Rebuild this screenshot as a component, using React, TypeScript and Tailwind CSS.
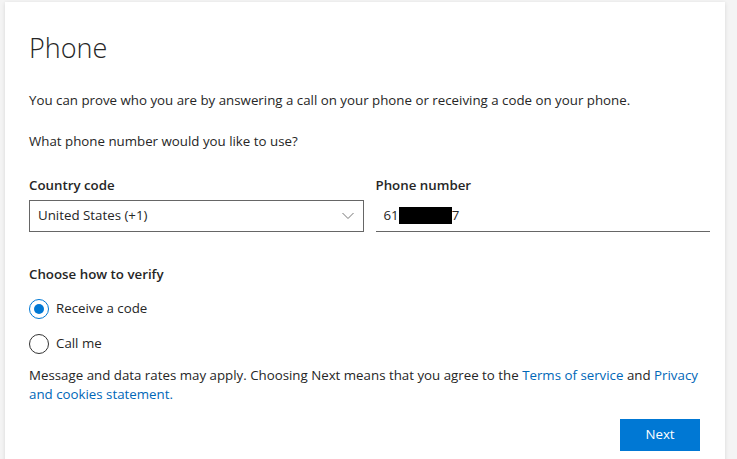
import React from 'react';

const App = () => {
  return (
    <div className="min-h-screen bg-[#f4f4f4] pl-[5px] pt-[2px] pr-[12px] text-[#262626]" style={{ fontFamily: '"Open Sans", "Noto Sans", sans-serif' }}>
      <div className="bg-white shadow-[0_1px_4px_rgba(0,0,0,0.12)] pl-[24px] pr-[15px] pt-[28px] pb-[20px] h-[470px]">
        {/* Title */}
        <h1 className="text-[27px] font-light leading-[36px] text-[#262626]">Phone</h1>

        <p className="mt-[25px] text-[13.3px] leading-[18px]">
          You can prove who you are by answering a call on your phone or receiving a code on your phone.
        </p>
        <p className="mt-[23px] text-[13.3px] leading-[18px]">What phone number would you like to use?</p>

        {/* Fields */}
        <div className="mt-[26px] grid grid-cols-2 gap-[12px]">
          <div>
            <label className="block text-[13.3px] font-semibold leading-[18px]">Country code</label>
            <div className="mt-[6px] flex h-[32px] items-center justify-between border border-[#666] px-[8px] text-[13.3px]">
              <span>United States (+1)</span>
              <svg width="12" height="8" viewBox="0 0 12 8" fill="none" className="mr-[1px]">
                <path d="M0.5 1L6 6.5L11.5 1" stroke="#777" strokeWidth="1" />
              </svg>
            </div>
          </div>
          <div>
            <label className="block text-[13.3px] font-semibold leading-[18px]">Phone number</label>
            <div className="mt-[6px] flex h-[32px] items-center border-b border-[#666] px-[8px] text-[13.3px]">
              <span>61</span>
              <span className="inline-block h-[17px] w-[53px] bg-black" />
              <span>7</span>
            </div>
          </div>
        </div>

        {/* Verify */}
        <div className="mt-[33px] text-[13.3px] font-semibold leading-[18px]">Choose how to verify</div>
        <div className="mt-[16px] flex items-center gap-[7px]">
          <span className="flex h-[20px] w-[20px] items-center justify-center rounded-full border border-[#0078d4]">
            <span className="h-[10px] w-[10px] rounded-full bg-[#0078d4]" />
          </span>
          <span className="text-[13.3px]">Receive a code</span>
        </div>
        <div className="mt-[15px] flex items-center gap-[7px]">
          <span className="h-[20px] w-[20px] rounded-full border border-[#333]" />
          <span className="text-[13.3px]">Call me</span>
        </div>

        <p className="mt-[12px] pr-[10px] text-[13.3px] leading-[19px]">
          Message and data rates may apply. Choosing Next means that you agree to the{' '}
          <a className="text-[#0067b8]">Terms of service</a> and{' '}
          <a className="text-[#0067b8]">Privacy and cookies statement.</a>
        </p>

        <div className="mt-[15px] flex justify-end pr-[10px]">
          <button className="h-[32px] w-[80px] bg-[#0078d4] text-[13.3px] text-white">Next</button>
        </div>
      </div>
    </div>
  );
};

export default App;
